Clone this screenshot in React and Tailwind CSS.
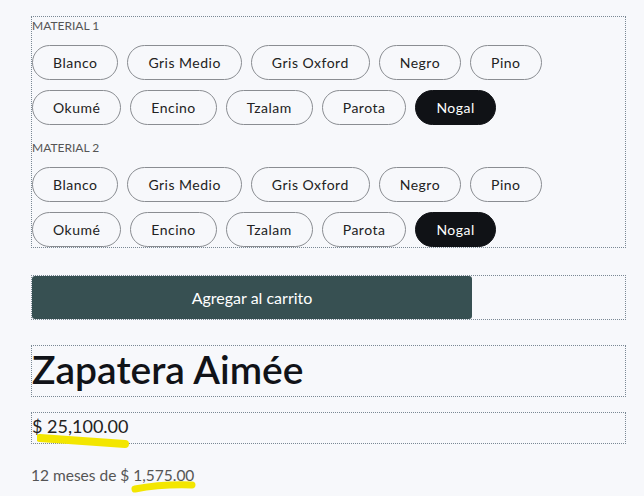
import React from "react";

const colores = [
  ["Blanco", "Gris Medio", "Gris Oxford", "Negro", "Pino"],
  ["Okumé", "Encino", "Tzalam", "Parota", "Nogal"],
];

function Pill({ label, active }) {
  return (
    <button
      type="button"
      className={
        active
          ? "h-[35px] rounded-full border border-[#101216] bg-[#101216] px-[20px] text-[14px] tracking-[0.035em] text-white"
          : "h-[35px] rounded-full border border-[#8a8d92] bg-transparent px-[20px] text-[14px] tracking-[0.035em] text-[#222]"
      }
    >
      {label}
    </button>
  );
}

function Material({ title }) {
  return (
    <div>
      <p className="text-[12px] leading-[18px] text-[#555]">{title}</p>
      <div className="mt-[10px] space-y-[10px]">
        {colores.map((row, i) => (
          <div key={i} className="flex gap-[9px]">
            {row.map((c) => (
              <Pill key={c} label={c} active={c === "Nogal"} />
            ))}
          </div>
        ))}
      </div>
    </div>
  );
}

export default function App() {
  return (
    <div
      className="min-h-[496px] bg-[#f7f8fb] pl-[31px] pr-[18px] pt-[16px] text-[#111]"
      style={{ fontFamily: "Lato, 'Noto Sans', sans-serif" }}
    >
      <div className="space-y-[14px] border border-dotted border-[#7a8894]">
        <Material title="MATERIAL 1" />
        <Material title="MATERIAL 2" />
      </div>

      <div className="mt-[27px] flex h-[45px] border border-dotted border-[#7a8894]">
        <button
          type="button"
          className="w-[440px] rounded-[3px] bg-[#375052] text-[16px] text-white"
        >
          Agregar al carrito
        </button>
      </div>

      <div className="mt-[25px] border border-dotted border-[#7a8894] pb-[4px]">
        <h1 className="text-[39px] font-semibold leading-[46px] text-[#111318]">
          Zapatera Aimée
        </h1>
      </div>

      <div className="relative mt-[15px] h-[32px] border border-dotted border-[#7a8894]">
        <p className="text-[18px] leading-[26px] text-[#222]">$ 25,100.00</p>
        <svg className="absolute left-[5px] top-[21px]" width="92" height="16" viewBox="0 0 92 16">
          <path d="M3 4 L88 10" stroke="#f3e600" strokeWidth="8" strokeLinecap="round" />
        </svg>
      </div>

      <div className="relative mt-[20px]">
        <p className="text-[15.5px] leading-[22px] text-[#555]">
          12 meses de $ 1,575.00
        </p>
        <svg className="absolute left-[100px] top-[13px]" width="66" height="16" viewBox="0 0 66 16">
          <path d="M4 12 Q30 7 61 8" stroke="#f3e600" strokeWidth="7" strokeLinecap="round" fill="none" />
        </svg>
      </div>
    </div>
  );
}
